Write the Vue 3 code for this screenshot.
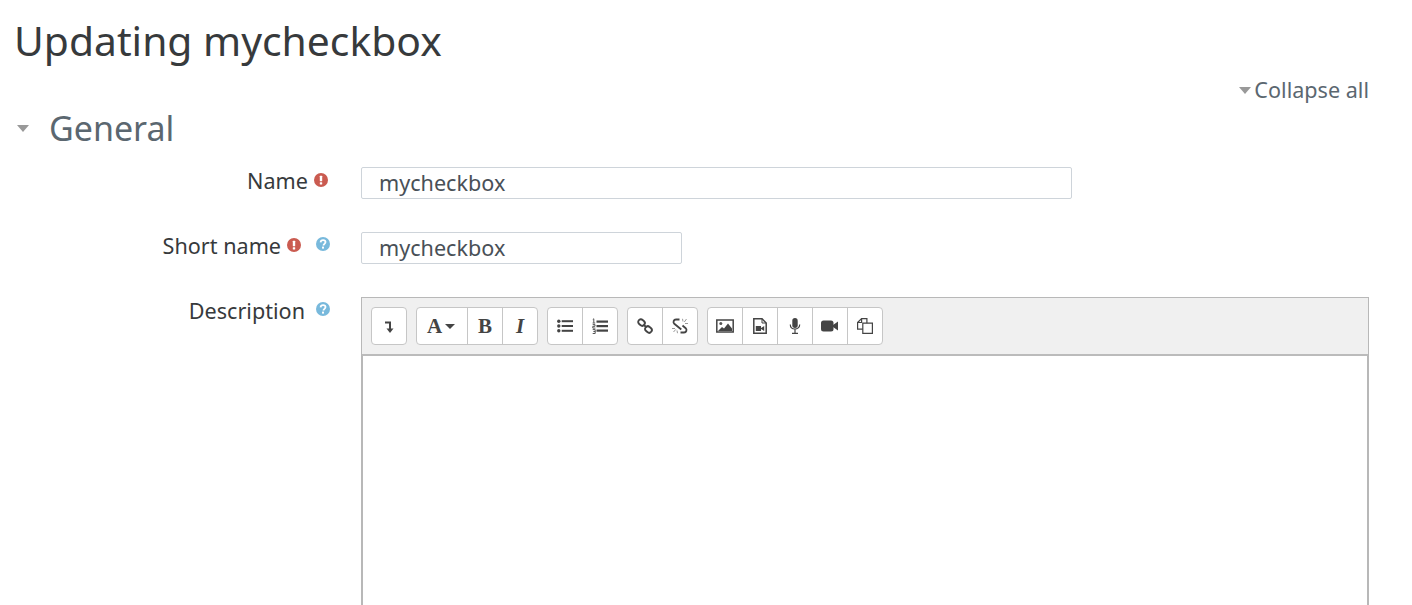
<template>
  <div class="page">
    <h2 class="title">Updating mycheckbox</h2>
    <div class="collapse-row">
      <a class="collapse-all"><span class="caret"></span>Collapse all</a>
    </div>
    <div class="section-head">
      <span class="section-caret"></span>
      <h3 class="section-title">General</h3>
    </div>
    <div class="row row-name">
      <div class="label-col">
        <label>Name</label>
        <svg class="status" viewBox="0 0 14 14"><circle cx="7" cy="7" r="7" fill="#ca5b50"/><rect x="5.8" y="2.7" width="2.4" height="5.6" rx=".6" fill="#fff"/><rect x="5.8" y="9.2" width="2.4" height="2.2" rx=".5" fill="#fff"/></svg>
      </div>
      <input class="text-input wide" value="mycheckbox" />
    </div>
    <div class="row row-short">
      <div class="label-col">
        <label>Short name</label>
        <svg class="status" viewBox="0 0 14 14"><circle cx="7" cy="7" r="7" fill="#ca5b50"/><rect x="5.8" y="2.7" width="2.4" height="5.6" rx=".6" fill="#fff"/><rect x="5.8" y="9.2" width="2.4" height="2.2" rx=".5" fill="#fff"/></svg>
        <svg class="help" viewBox="0 0 14 14"><circle cx="7" cy="7" r="7" fill="#78b9dc"/><path d="M4.6 5.4c.1-1.5 1.2-2.3 2.5-2.3s2.4.8 2.4 2c0 1.8-2 1.7-2 3.3" fill="none" stroke="#fff" stroke-width="1.8"/><rect x="6" y="9.6" width="2" height="2" fill="#fff"/></svg>
      </div>
      <input class="text-input narrow" value="mycheckbox" />
    </div>
    <div class="row row-desc">
      <div class="label-col">
        <label>Description</label>
        <svg class="help" viewBox="0 0 14 14"><circle cx="7" cy="7" r="7" fill="#78b9dc"/><path d="M4.6 5.4c.1-1.5 1.2-2.3 2.5-2.3s2.4.8 2.4 2c0 1.8-2 1.7-2 3.3" fill="none" stroke="#fff" stroke-width="1.8"/><rect x="6" y="9.6" width="2" height="2" fill="#fff"/></svg>
      </div>
      <div class="editor">
        <div class="toolbar">
          <div class="group">
            <button class="btn">
              <svg viewBox="0 0 16 16" class="ico"><path d="M4 4.500h5V12" fill="none" stroke="#444" stroke-width="2"/><path d="M5.500 10.500h7L9 15z" fill="#444"/></svg>
            </button>
          </div>
          <div class="group">
            <button class="btn btn-a">
              <span class="serif-a">A</span><span class="a-caret"></span>
            </button>
            <button class="btn"><span class="serif-b">B</span></button>
            <button class="btn"><span class="serif-i">I</span></button>
          </div>
          <div class="group">
            <button class="btn">
              <svg viewBox="0 0 16 16" class="ico"><g fill="#444"><circle cx="1.800" cy="3.200" r="1.700"/><circle cx="1.800" cy="8" r="1.700"/><circle cx="1.800" cy="12.800" r="1.700"/><rect x="4.700" y="2.200" width="11.300" height="2"/><rect x="4.700" y="7" width="11.300" height="2"/><rect x="4.700" y="11.800" width="11.300" height="2"/></g></svg>
            </button>
            <button class="btn">
              <svg viewBox="0 0 16 16" class="ico"><g fill="#444"><rect x="4.500" y="2.500" width="11.500" height="2.200"/><rect x="4.500" y="7" width="11.500" height="2.200"/><rect x="4.500" y="11.500" width="11.500" height="2.200"/></g><g fill="none" stroke="#555" stroke-width="1"><path d="M.8 1.500l1-.7v4M.6 5h2.600M.7 6.600h2.300v1.700H.8v1.800h2.600M.7 11.600h2.500v3.900H.7M1.400 13.500h1.800"/></g></svg>
            </button>
          </div>
          <div class="group">
            <button class="btn">
              <svg viewBox="0 0 16 16" class="ico"><g fill="none" stroke="#444" stroke-width="1.900"><rect x="1" y="1.800" width="7" height="5.400" rx="2.700" transform="rotate(40 4.500 4.500)"/><rect x="8" y="8.800" width="7" height="5.400" rx="2.700" transform="rotate(40 11.500 11.500)"/><path d="M6.500 6.500l3 3"/></g></svg>
            </button>
            <button class="btn">
              <svg viewBox="0 0 16 16" class="ico"><g fill="none" stroke="#444" stroke-width="1.800"><path d="M7.500 1.500H4C1.500 1.500.8 4.300 2.300 5.800l7 5.700"/><path d="M8.500 14.500H12c2.500 0 3.200-2.800 1.700-4.300L10.500 7.500"/></g><g stroke="#999" stroke-width="1"><path d="M10.500 .8 11 3.500M14.500 1 12.300 4M16 5.500h-3M0 10.500h3M1.500 14 3.700 11.500M5.500 15.200 5 12.500"/></g></svg>
            </button>
          </div>
          <div class="group">
            <button class="btn">
              <svg viewBox="0 0 18 16" class="ico-wide"><rect x=".8" y="2" width="16.400" height="12" fill="#fff" stroke="#444" stroke-width="1.500"/><circle cx="4.800" cy="5.500" r="1.500" fill="#555"/><path d="M2 13l4-4 2 1.500 4-5 4 5V13z" fill="#444"/></svg>
            </button>
            <button class="btn">
              <svg viewBox="0 0 16 16" class="ico"><path d="M1.800 .8h8.200l4.200 4.200v10.200H1.800z" fill="#fff" stroke="#444" stroke-width="1.500"/><path d="M10 .8v4.200h4.200" fill="none" stroke="#444" stroke-width="1"/><rect x="3.800" y="8" width="5.200" height="5" fill="#444"/><path d="M9 10l3.200-2v5L9 11z" fill="#444"/></svg>
            </button>
            <button class="btn">
              <svg viewBox="0 0 16 16" class="ico"><rect x="5.300" y="0" width="5.400" height="10" rx="2.700" fill="#444"/><path d="M3.300 6.500c0 6 9.400 6 9.400 0M8 11.500V15M5 15.400h6" fill="none" stroke="#444" stroke-width="1.200"/></svg>
            </button>
            <button class="btn">
              <svg viewBox="0 0 18 16" class="ico-wide"><rect x="0" y="2.500" width="12.500" height="11" rx="2.500" fill="#444"/><path d="M12 7l5-3.500v9L12 9z" fill="#444"/></svg>
            </button>
            <button class="btn">
              <svg viewBox="0 0 16 16" class="ico"><g fill="#fff" stroke="#444" stroke-width="1.200"><path d="M.6 4.500 4.600.6h5.300v10.500H.6z"/><path d="M4.600.6v3.900H.6" fill="none"/><path d="M5.800 5.200h9.600v10.200H5.800z"/></g></svg>
            </button>
          </div>
        </div>
        <div class="content"></div>
      </div>
    </div>
  </div>
</template>

<script setup>
</script>

<style>
html, body { margin: 0; background: #fff; overflow: hidden; }
</style>

<style scoped>
.page {
  box-sizing: border-box;
  width: 1412px;
  height: 605px;
  overflow: hidden;
  padding: 0 43px 0 15px;
  font-family: "Noto Sans", sans-serif;
  color: #373a3c;
}
.title {
  margin: 0 0 0 -1px;
  padding-top: 12px;
  font-size: 40.8px;
  line-height: 56px;
  font-weight: 400;
  height: 58px;
}
.collapse-row {
  display: flex;
  justify-content: flex-end;
  margin-top: 6px;
  height: 28px;
}
.collapse-all {
  display: flex;
  align-items: center;
  font-size: 21.6px;
  line-height: 28px;
  color: #5b6770;
}
.caret {
  width: 0;
  height: 0;
  border-left: 6.5px solid transparent;
  border-right: 6.5px solid transparent;
  border-top: 7px solid #999;
  margin-right: 3px;
}
.section-head {
  display: flex;
  align-items: center;
  margin-top: 4px;
  height: 40px;
}
.section-caret {
  width: 0;
  height: 0;
  border-left: 6.5px solid transparent;
  border-right: 6.5px solid transparent;
  border-top: 7px solid #999;
  margin-left: 2px;
  margin-right: 20px;
}
.section-title {
  margin: 0;
  font-size: 34px;
  line-height: 40px;
  font-weight: 400;
  color: #5b6770;
}
.row {
  display: flex;
  align-items: flex-start;
}
.row-name { margin-top: 19px; }
.row-short { margin-top: 33px; }
.row-desc { margin-top: 33px; }
.label-col {
  box-sizing: border-box;
  width: 346px;
  flex: none;
  display: flex;
  justify-content: flex-end;
  align-items: flex-start;
  padding-right: 31px;
  font-size: 21.6px;
  line-height: 28px;
}
.label-col label { display: block; margin-right: 6px; }
.status { width: 14px; height: 14px; margin-top: 6px; flex: none; }
.help { width: 14px; height: 14px; margin-top: 5px; margin-left: 15px; flex: none; }
.row-name .label-col { padding-right: 33px; }
.row-desc .label-col label { margin-right: -4px; }
.text-input {
  box-sizing: border-box;
  height: 32px;
  border: 1px solid #ced4da;
  border-radius: 2px;
  padding: 0 17px 2px;
  margin: 0;
  font-family: inherit;
  font-size: 21.6px;
  color: #495057;
  background: #fff;
  outline: none;
}
.wide { width: 711px; }
.narrow { width: 321px; }
.editor {
  box-sizing: border-box;
  width: 1008px;
  flex: none;
  border: 1px solid #b8b8b8;
  border-bottom: none;
}
.toolbar {
  box-sizing: border-box;
  height: 58px;
  background: #f0f0f0;
  border-bottom: 2px solid #bbb;
  padding: 9px 9px 0;
  display: flex;
  gap: 9px;
  align-items: flex-start;
}
.group {
  display: flex;
  height: 38px;
  box-sizing: border-box;
  border: 1px solid #c6c6c6;
  border-radius: 4px;
  background: #fff;
}
.btn {
  box-sizing: border-box;
  width: 35px;
  height: 36px;
  padding: 0;
  margin: 0;
  border: none;
  border-left: 1px solid #c6c6c6;
  background: transparent;
  display: flex;
  align-items: center;
  justify-content: center;
  color: #444;
}
.btn:first-child { border-left: none; width: 34px; }
.btn-a { width: 50px !important; gap: 3px; padding-right: 2px; }
.ico { width: 16px; height: 16px; display: block; }
.ico-wide { width: 18px; height: 16px; display: block; }
.serif-a, .serif-b, .serif-i {
  font-family: "Liberation Serif", serif;
  font-size: 21px;
  font-weight: 700;
  line-height: 1;
  color: #444;
}
.serif-i { font-style: italic; }
.a-caret {
  width: 0;
  height: 0;
  border-left: 5px solid transparent;
  border-right: 5px solid transparent;
  border-top: 5px solid #444;
}
.content {
  height: 300px;
  background: #fff;
  border-left: 2px solid #b8b8b8;
  border-right: 2px solid #b8b8b8;
  margin: 0 -1px;
}
</style>
